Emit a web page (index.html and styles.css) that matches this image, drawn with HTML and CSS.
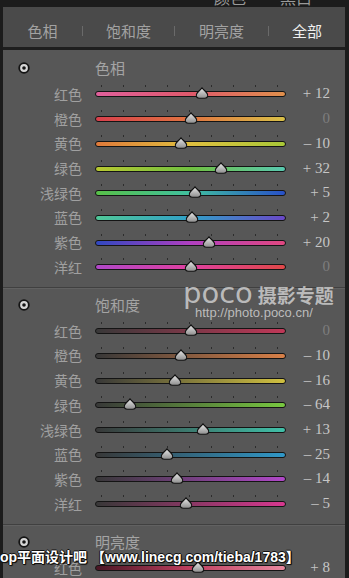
FILE: index.html
```html
<!DOCTYPE html>
<html lang="zh-CN">
<head>
  <meta charset="UTF-8">
  <meta name="viewport" content="width=device-width, initial-scale=1.0">
  <title>HSL</title>
  <link rel="stylesheet" href="styles.css">
</head>
<body>
  <div class="topbar">
    <span class="top-tab">颜色</span>
    <span class="top-tab">黑白</span>
  </div>
  <div class="frame">
    <div class="tabs">
      <div class="tab t1">色相</div>
      <i class="sep"></i>
      <div class="tab t2">饱和度</div>
      <i class="sep"></i>
      <div class="tab t3">明亮度</div>
      <i class="sep"></i>
      <div class="tab t4 active">全部</div>
    </div>
    <div class="panel" id="panel"></div>
  </div>

  <div class="watermark">
    <div class="wm-line"><span class="wm-poco">poco</span><span class="wm-cn">摄影专题</span></div>
    <div class="wm-url">http://photo.poco.cn/</div>
  </div>
  <div class="caption">op平面设计吧 【www.linecg.com/tieba/1783】</div>

  <script>
    const colors = [
      { name: '红色', cls: 'red' },
      { name: '橙色', cls: 'orange' },
      { name: '黄色', cls: 'yellow' },
      { name: '绿色', cls: 'green' },
      { name: '浅绿色', cls: 'aqua' },
      { name: '蓝色', cls: 'blue' },
      { name: '紫色', cls: 'purple' },
      { name: '洋红', cls: 'magenta' }
    ];

    const sections = [
      { title: '色相', key: 'hue', values: [12, 0, -10, 32, 5, 2, 20, 0] },
      { title: '饱和度', key: 'sat', values: [0, -10, -16, -64, 13, -25, -14, -5] },
      { title: '明亮度', key: 'lum', values: [8] }
    ];

    let thumbId = 0;

    function formatValue(v) {
      if (v === 0) return '0';
      return (v > 0 ? '+ ' : '\u2013 ') + Math.abs(v);
    }

    function thumb(v) {
      const id = 'tg' + (thumbId++);
      const left = (v + 100) / 2;
      return `<span class="thumb" style="left: ${left}%">
        <svg width="13" height="12" viewBox="0 0 13 12">
          <defs>
            <linearGradient id="${id}" x1="0" y1="0" x2="0" y2="1">
              <stop offset="0" stop-color="#e8e8e8"/>
              <stop offset="1" stop-color="#8e8e8e"/>
            </linearGradient>
          </defs>
          <path d="M6.5 0.8 C8 3 12.2 5.4 12.2 8.2 Q12.2 11.2 9 11.2 L4 11.2 Q0.8 11.2 0.8 8.2 C0.8 5.4 5 3 6.5 0.8 Z" fill="url(#${id})" stroke="#121212" stroke-width="1.1"/>
        </svg>
      </span>`;
    }

    const panel = document.getElementById('panel');
    let html = '';
    sections.forEach(sec => {
      html += `<div class="section">
        <div class="head">
          <span class="target">
            <svg width="12" height="12" viewBox="0 0 12 12">
              <circle cx="6" cy="6" r="4.8" fill="#d6d6d6" stroke="#141414" stroke-width="1.8"/>
              <circle cx="6" cy="6" r="1.8" fill="#141414"/>
            </svg>
          </span>
          <span class="title">${sec.title}</span>
        </div>`;
      sec.values.forEach((v, i) => {
        const c = colors[i];
        html += `<div class="row">
          <span class="label">${c.name}</span>
          <div class="track ${sec.key}-${c.cls}">${thumb(v)}</div>
          <span class="value${v === 0 ? ' zero' : ''}">${formatValue(v)}</span>
        </div>`;
      });
      html += '</div>';
    });
    panel.innerHTML = html;
  </script>
</body>
</html>
```

FILE: styles.css
```css
body {
  margin: 0;
  width: 349px;
  height: 578px;
  overflow: hidden;
  position: relative;
  background-color: #1c1c1c;
  font-family: "Noto Sans CJK SC", sans-serif;
}
.topbar {
  height: 7px;
  overflow: hidden;
  display: flex;
  gap: 34px;
  padding-left: 214px;
}
.top-tab {
  font-size: 16px;
  line-height: 16px;
  margin-top: -11px;
  color: #9a9a9a;
}
.frame {
  border-left: 3px solid #1c1c1c;
  border-right: 4px solid #1c1c1c;
}
.tabs {
  display: flex;
  align-items: center;
  height: 40px;
  background-color: #4a4a4a;
  border-bottom: 3px solid #1e1e1e;
}
.tab {
  text-align: center;
  font-size: 15px;
  color: #a2a2a2;
  padding-top: 6px;
}
.tab.active {
  color: #f0f0f0;
}
.t1 { width: 79px; }
.t2 { width: 91px; }
.t3 { width: 93px; }
.t4 { width: 76px; }
.sep {
  width: 1px;
  height: 10px;
  margin-top: 7px;
  background-color: #6a6a6a;
}
.panel {
  background-color: #575757;
}
.section {
  padding: 10px 15px 7.65px 0;
}
.section + .section {
  border-top: 1px solid #404040;
  box-shadow: inset 0 1px 0 #616161;
  padding-top: 9px;
}
.head, .row {
  display: grid;
  grid-template-columns: 79px 191px 31px;
  column-gap: 13px;
  align-items: center;
}
.head {
  height: 16px;
  margin-bottom: 5.65px;
}
.target {
  display: flex;
  margin-left: 15px;
}
.title {
  font-size: 15px;
  line-height: 16px;
  color: #a4a4a4;
}
.row {
  height: 24.7px;
}
.label {
  text-align: right;
  font-size: 14px;
  color: #a0a0a0;
}
.track {
  position: relative;
  height: 4px;
  border: 1px solid #141414;
  border-radius: 3px;
  margin-top: 1px;
}
.track::before {
  content: "";
  position: absolute;
  top: -7px;
  left: 5px;
  width: 178px;
  height: 2px;
  background: repeating-linear-gradient(to right, #2c2c2c 0 1px, transparent 1px 22px);
}
.thumb {
  position: absolute;
  top: 50%;
  transform: translate(-50%, -58%);
  display: flex;
}
.value {
  text-align: right;
  font-family: "Liberation Serif", serif;
  font-size: 15px;
  color: #c6c6c6;
  white-space: nowrap;
}
.value.zero {
  color: #7e7e7e;
}

/* hue */
.hue-red { background: linear-gradient(to right, #e0609c, #e05a6c 50%, #e0904c); }
.hue-orange { background: linear-gradient(to right, #d8404c, #e07440 50%, #d8c048); }
.hue-yellow { background: linear-gradient(to right, #e07a3a, #e0c040 50%, #a8c838); }
.hue-green { background: linear-gradient(to right, #b8c830, #70c040 50%, #58c8b0); }
.hue-aqua { background: linear-gradient(to right, #58c048, #40c0a0 50%, #2850c8); }
.hue-blue { background: linear-gradient(to right, #50c898, #30a0c8 50%, #6a48c8); }
.hue-purple { background: linear-gradient(to right, #3048c0, #b040c0 50%, #e04880); }
.hue-magenta { background: linear-gradient(to right, #b048c8, #e040a0 50%, #e04848); }

/* saturation */
.sat-red { background: linear-gradient(to right, #383838, #c03858); }
.sat-orange { background: linear-gradient(to right, #383838, #d88048); }
.sat-yellow { background: linear-gradient(to right, #383838, #d0c040); }
.sat-green { background: linear-gradient(to right, #383838, #78c840); }
.sat-aqua { background: linear-gradient(to right, #383838, #40c0a8); }
.sat-blue { background: linear-gradient(to right, #383838, #3098c8); }
.sat-purple { background: linear-gradient(to right, #383838, #b048c8); }
.sat-magenta { background: linear-gradient(to right, #383838, #d83890); }

/* luminance */
.lum-red { background: linear-gradient(to right, #4a1624, #c04060 50%, #e888a0); }

.watermark {
  position: absolute;
  top: 280px;
  left: 183px;
  color: rgba(214, 214, 214, 0.8);
}
.wm-line {
  display: flex;
  align-items: baseline;
  gap: 5px;
  height: 26px;
}
.wm-poco {
  font-family: "DejaVu Sans", sans-serif;
  font-size: 29px;
  line-height: 26px;
}
.wm-cn {
  font-size: 19px;
  font-weight: 700;
  line-height: 26px;
}
.wm-url {
  font-family: "Liberation Sans", sans-serif;
  font-size: 13px;
  margin-left: 12px;
  line-height: 14px;
}
.caption {
  position: absolute;
  left: 0;
  top: 546px;
  font-family: "Liberation Sans", "Noto Sans CJK SC", sans-serif;
  font-weight: 700;
  font-size: 14px;
  color: #ffffff;
  white-space: nowrap;
  text-shadow: 1px 0 0 #111, -1px 0 0 #111, 0 1px 0 #111, 0 -1px 0 #111, 1px 1px 1px #000;
}
```
